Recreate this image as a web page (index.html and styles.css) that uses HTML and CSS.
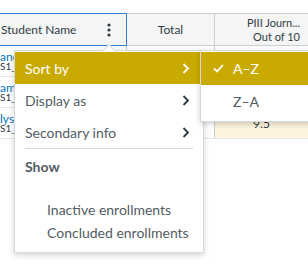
FILE: index.html
```html
<!DOCTYPE html>
<html lang="en">
<head>
    <meta name="viewport" content="width=device-width, initial-scale=1.0">
    <link rel="stylesheet" href="styles.css">
    <title>Gradebook - sort menu</title>
</head>

<body>
    <div class="page">

        <div class="grid">
            <!-- header row -->
            <div class="hcell student-head">
                <span>Student Name</span>
                <svg class="kebab" width="4" height="14" viewBox="0 0 4 14">
                    <circle cx="2" cy="2" r="1.6"/>
                    <circle cx="2" cy="7" r="1.6"/>
                    <circle cx="2" cy="12" r="1.6"/>
                </svg>
            </div>
            <div class="hcell total-head">Total</div>
            <div class="hcell assign-head">
                <span>PIII Journ...</span>
                <span>Out of 10</span>
            </div>

            <!-- student rows -->
            <div class="cell name"><a href="#">ane</a><span class="sis">S1_</span></div>
            <div class="cell total"></div>
            <div class="cell score"></div>

            <div class="cell name"><a href="#">am</a><span class="sis">S1_</span></div>
            <div class="cell total"></div>
            <div class="cell score"></div>

            <div class="cell name"><a href="#">lys</a><span class="sis">S1_</span></div>
            <div class="cell total"></div>
            <div class="cell score late">9.5</div>
        </div>

        <!-- column menu -->
        <div class="menu">
            <div class="item active">Sort by
                <svg class="chev" width="8" height="11" viewBox="0 0 8 11"><path d="M1.5 1 L6 5.5 L1.5 10"/></svg>
            </div>
            <div class="item">Display as
                <svg class="chev" width="8" height="11" viewBox="0 0 8 11"><path d="M1.5 1 L6 5.5 L1.5 10"/></svg>
            </div>
            <div class="item">Secondary info
                <svg class="chev" width="8" height="11" viewBox="0 0 8 11"><path d="M1.5 1 L6 5.5 L1.5 10"/></svg>
            </div>
            <div class="sep"></div>
            <div class="group-label">Show</div>
            <div class="option">Inactive enrollments</div>
            <div class="option">Concluded enrollments</div>
        </div>

        <!-- sort by submenu -->
        <div class="submenu">
            <div class="item active">
                <svg class="check" width="11" height="9" viewBox="0 0 11 9"><path d="M1 4.5 L4 7.5 L10 1"/></svg>
                A–Z
            </div>
            <div class="item">Z–A</div>
        </div>
    </div>
</body>
</html>
```

FILE: styles.css
```css
body {
    margin: 0px;
    font-family: Lato, "Liberation Sans", sans-serif;
    color: #2d3b45;
    background-color: white;
}

.page {
    position: relative;
    width: 308px;
    height: 270px;
    padding-top: 13px;
    box-sizing: border-box;
    overflow: hidden;
}

.grid {
    display: grid;
    grid-template-columns: 127px 88px 1fr;
}

/* header */
.hcell {
    height: 33px;
    box-sizing: border-box;
    display: flex;
    align-items: center;
    background-color: #f5f5f5;
    border-top: 1px solid #c7cdd1;
    border-bottom: 1px solid #c7cdd1;
    border-right: 1px solid #c7cdd1;
    font-size: 12px;
}

.student-head {
    justify-content: space-between;
    padding-left: 1px;
    padding-right: 15px;
    border-color: #2a80d2;
}

.kebab {
    fill: #2d3b45;
}

.total-head {
    justify-content: center;
}

.assign-head {
    flex-direction: column;
    align-items: flex-end;
    justify-content: center;
    padding-right: 8px;
    border-right: 0px;
    font-size: 11px;
    line-height: 14px;
}

/* body cells */
.cell {
    height: 31px;
    box-sizing: border-box;
    border-bottom: 1px solid #e3e6e8;
    border-right: 1px solid #e3e6e8;
    font-size: 12px;
}

.name {
    display: flex;
    flex-direction: column;
    align-items: flex-start;
    padding-top: 6px;
    overflow: hidden;
    white-space: nowrap;
    border-right-color: #c7cdd1;
}

.name a {
    color: #0374b5;
    text-decoration: none;
    font-size: 12px;
    line-height: 9px;
}

.sis {
    font-size: 10px;
    line-height: 8px;
    margin-top: 1px;
}

.total, .score {
    display: flex;
    align-items: center;
    justify-content: center;
}

.total {
    border-right-color: #c7cdd1;
}

.score {
    border-right: 0px;
}

.late {
    background-color: #fdf4dd;
}

/* menus */
.menu, .submenu {
    position: absolute;
    background-color: white;
    border: 1px solid #d5d9dc;
    box-shadow: 0px 2px 6px rgba(0, 0, 0, 0.18);
    font-size: 14px;
    color: #525c63;
}

.menu {
    left: 14px;
    top: 50px;
    width: 188px;
    padding: 1px 0px 8px 0px;
}

.menu::before {
    content: "";
    position: absolute;
    left: 89px;
    top: -5px;
    width: 9px;
    height: 9px;
    background-color: white;
    border-left: 1px solid #d5d9dc;
    border-top: 1px solid #d5d9dc;
    transform: rotate(45deg);
}

.menu .item {
    position: relative;
    display: flex;
    align-items: center;
    justify-content: space-between;
    height: 32px;
    padding-left: 10px;
    padding-right: 13px;
}

.item.active {
    background-color: #c9aa00;
    color: white;
}

.chev {
    fill: none;
    stroke: #2d3b45;
    stroke-width: 1.8;
}

.active .chev {
    stroke: white;
}

.sep {
    height: 1px;
    margin: 0px 10px 0px 10px;
    background-color: #d5d9dc;
}

.group-label {
    padding: 9px 0px 22px 10px;
    line-height: 18px;
    font-weight: bold;
}

.option {
    padding-left: 32px;
    line-height: 23px;
}

.submenu {
    left: 200px;
    top: 50px;
    width: 120px;
    padding: 1px 0px 3px 0px;
}

.submenu .item {
    display: flex;
    align-items: center;
    gap: 9px;
    height: 33px;
    padding-left: 32px;
}

.submenu .item.active {
    padding-left: 12px;
}

.check {
    fill: none;
    stroke: white;
    stroke-width: 1.8;
}
```
